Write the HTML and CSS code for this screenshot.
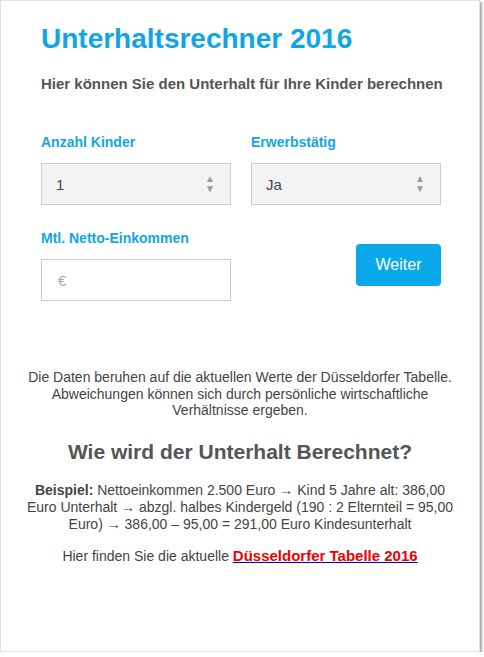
FILE: index.html
```html
<!DOCTYPE html>
<html lang="de">
<head>
    <meta charset="UTF-8">
    <meta name="viewport" content="width=device-width, initial-scale=1.0">
    <title>Unterhaltsrechner 2016</title>
    <link rel="stylesheet" href="styles.css">
</head>
<body>
    <div class="frame">
        <h1 class="title">Unterhaltsrechner 2016</h1>
        <p class="subtitle">Hier können Sie den Unterhalt für Ihre Kinder berechnen</p>

        <div class="form-grid">
            <div class="field">
                <label class="label">Anzahl Kinder</label>
                <div class="select">
                    <span>1</span>
                    <span class="arrows">▲<br>▼</span>
                </div>
            </div>
            <div class="field">
                <label class="label">Erwerbstätig</label>
                <div class="select">
                    <span>Ja</span>
                    <span class="arrows">▲<br>▼</span>
                </div>
            </div>
            <div class="field">
                <label class="label">Mtl. Netto-Einkommen</label>
                <input type="text" class="input" placeholder="€">
            </div>
            <div class="field field-button">
                <button class="button">Weiter</button>
            </div>
        </div>

        <div class="info">
            <p class="note">Die Daten beruhen auf die aktuellen Werte der Düsseldorfer Tabelle. Abweichungen können sich durch persönliche wirtschaftliche Verhältnisse ergeben.</p>
            <h2 class="info-title">Wie wird der Unterhalt Berechnet?</h2>
            <p class="example"><strong>Beispiel:</strong> Nettoeinkommen 2.500 Euro → Kind 5 Jahre alt: 386,00 Euro Unterhalt → abzgl. halbes Kindergeld (190 : 2 Elternteil = 95,00 Euro) → 386,00 – 95,00 = 291,00 Euro Kindesunterhalt</p>
            <p class="example link-line">Hier finden Sie die aktuelle <a href="#" class="link"><strong>Düsseldorfer Tabelle 2016</strong></a></p>
        </div>
    </div>
</body>
</html>
```

FILE: styles.css
```css
body {
    font-family: "Liberation Sans", Arial, sans-serif;
    margin: 0;
    background: #fff;
}
.frame {
    width: 480px;
    height: 652px;
    box-sizing: border-box;
    border: 1px solid #e2e2e2;
    box-shadow: 2px 2px 2px rgba(0, 0, 0, 0.35);
    padding: 22px 40px 0 40px;
    color: #555;
}
.title {
    color: #12a5e5;
    font-size: 28px;
    margin: 0;
    line-height: 32px;
}
.subtitle {
    font-size: 15px;
    font-weight: bold;
    white-space: nowrap;
    margin: 20px 0 0 0;
}
.form-grid {
    display: grid;
    grid-template-columns: 190px 190px;
    column-gap: 20px;
    row-gap: 25px;
    margin-top: 42px;
}
.label {
    display: block;
    color: #12a5e5;
    font-size: 14px;
    font-weight: bold;
    margin-bottom: 13px;
}
.select {
    display: flex;
    justify-content: space-between;
    align-items: center;
    height: 42px;
    box-sizing: border-box;
    background: #f3f3f3;
    border: 1px solid #ccc;
    padding: 0 15px 0 14px;
    font-size: 15px;
    color: #444;
}
.arrows {
    font-size: 10px;
    line-height: 10px;
    color: #999;
    text-align: center;
}
.input {
    display: block;
    width: 190px;
    height: 42px;
    box-sizing: border-box;
    border: 1px solid #ccc;
    padding: 0 16px;
    font-family: inherit;
    font-size: 15px;
    margin: 0;
}
.input::placeholder {
    color: #aaa;
}
.field-button {
    display: flex;
    justify-content: flex-end;
    align-items: flex-start;
    padding-top: 14px;
}
.button {
    background: #0aa9e9;
    color: white;
    border: none;
    width: 85px;
    height: 42px;
    border-radius: 4px;
    font-family: inherit;
    font-size: 16px;
    cursor: pointer;
}
.info {
    text-align: center;
    margin: 68px -20px 0 -20px;
    font-size: 14px;
    color: #444;
}
.note {
    margin: 0;
    line-height: 16.5px;
}
.info-title {
    font-size: 21px;
    color: #555;
    margin: 21px 0 0 0;
}
.example {
    margin: 18px 0 0 0;
    line-height: 17px;
}
.link-line {
    margin-top: 14px;
}
.link {
    color: #00c;
}
.link strong {
    color: #e00;
    font-size: 15px;
}
```
